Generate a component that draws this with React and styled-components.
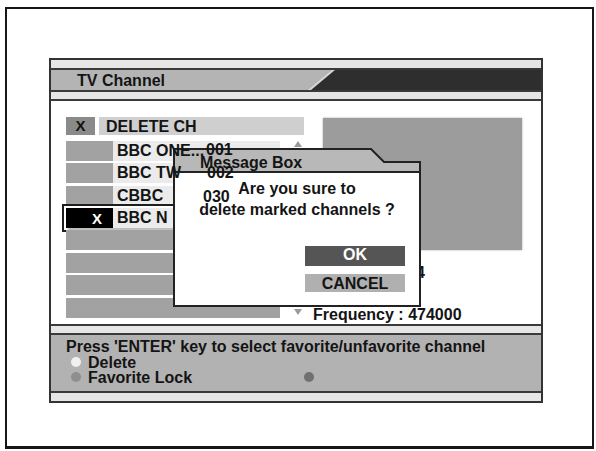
import React from 'react';
import styled, { createGlobalStyle } from 'styled-components';

const GlobalStyle = createGlobalStyle`
  html, body {
    margin: 0;
    padding: 0;
    background: #fff;
  }
  body {
    font-family: "Liberation Sans", Arial, sans-serif;
    font-weight: bold;
    color: #141414;
  }
`;

const Page = styled.div`
  width: 596px;
  height: 451px;
  padding: 7px 0 0 5px;
  box-sizing: border-box;
`;

const Frame = styled.div`
  width: 589px;
  height: 442px;
  box-sizing: border-box;
  border: 2px solid #161616;
  border-bottom-width: 3px;
  padding: 49px 0 0 42px;
`;

const Panel = styled.div`
  width: 494px;
  height: 345px;
  box-sizing: border-box;
  border: 2px solid #333;
  display: flex;
  flex-direction: column;
`;

const Strip = styled.div`
  height: ${({ $h }) => $h}px;
  background: #e6e6e6;
  border-bottom: ${({ $noLine }) => ($noLine ? '0' : '2px solid #3a3a3a')};
  border-top: ${({ $lineTop }) => ($lineTop ? '2px solid #3a3a3a' : '0')};
`;

const TitleBar = styled.div`
  height: 20px;
  display: flex;
  background: #b4b4b4;
  border-bottom: 2px solid #3a3a3a;
`;

const TitleText = styled.div`
  flex: 1;
  padding-left: 26px;
  font-size: 16px;
  line-height: 21px;
`;

const DarkTab = styled.div`
  position: relative;
  width: 233px;
  background: #d8d8d8;
  clip-path: polygon(24px 0, 100% 0, 100% 100%, 0 100%);

  &::after {
    content: '';
    position: absolute;
    inset: 0;
    background: #2e2e2e;
    clip-path: polygon(27px 0, 100% 0, 100% 100%, 3px 100%);
  }
`;

const Content = styled.div`
  position: relative;
  height: 225px;
  background: #fff;
  display: flex;
  gap: 9px;
  padding: 16px 0 0 15px;
  box-sizing: border-box;
`;

const ListCol = styled.div`
  width: 238px;
  display: flex;
  flex-direction: column;
`;

const ListHeader = styled.div`
  height: 18px;
  display: flex;
  gap: 4px;
`;

const XBox = styled.div`
  width: 29px;
  background: #8a8a8a;
  display: flex;
  align-items: center;
  justify-content: center;
  font-size: 15px;
  color: #111;
`;

const DeleteBar = styled.div`
  flex: 1;
  background: #cfcfcf;
  padding-left: 7px;
  font-size: 16px;
  line-height: 19px;
`;

const ListBody = styled.div`
  display: flex;
  margin-top: 6px;
`;

const Rows = styled.div`
  width: 214px;
  display: grid;
  grid-auto-rows: 20px;
  row-gap: 2.4px;
`;

const Row = styled.div`
  position: relative;
  display: flex;
  background: ${({ $empty }) => ($empty ? '#a2a2a2' : '#ebebeb')};
  outline: ${({ $selected }) => ($selected ? '2px solid #1e1e1e' : 'none')};
  outline-offset: 2px;
  box-shadow: ${({ $selected }) => ($selected ? '2px 3px 2px #bdbdbd' : 'none')};
`;

const Block = styled.div`
  width: 47px;
  background: ${({ $selected }) => ($selected ? '#000' : '#a2a2a2')};
  color: #fff;
  font-size: 15px;
  display: flex;
  align-items: center;
  justify-content: flex-end;
  padding-right: 11px;
  box-sizing: border-box;
`;

const Name = styled.span`
  position: relative;
  z-index: 3;
  padding-left: 4px;
  font-size: 16px;
  line-height: 20px;
`;

const Num = styled.span`
  position: absolute;
  z-index: 3;
  left: ${({ $x }) => $x}px;
  top: ${({ $y }) => $y}px;
  font-size: 16px;
  line-height: 16px;
`;

const Scroll = styled.div`
  flex: 1;
  display: flex;
  flex-direction: column;
  justify-content: space-between;
  padding: 0 0 3px 14px;
`;

const Arrow = styled.div`
  width: 0;
  height: 0;
  border-left: 4px solid transparent;
  border-right: 4px solid transparent;
  ${({ $down }) =>
    $down ? 'border-top: 6px solid #9a9a9a;' : 'border-bottom: 6px solid #9a9a9a;'}
`;

const RightCol = styled.div`
  flex: 1;
  display: flex;
  flex-direction: column;
`;

const Preview = styled.div`
  margin: 1px 0 0 10px;
  width: 199px;
  height: 132px;
  background: #9c9c9c;
  box-shadow: 0 0 2px #a8a8a8;
`;

const Info = styled.div`
  font-size: 16px;
  line-height: 16px;
  margin-top: ${({ $mt }) => $mt}px;
  padding-left: ${({ $pl }) => $pl || 0}px;
`;

const Dialog = styled.div`
  position: absolute;
  z-index: 2;
  left: 122px;
  top: 47px;
  width: 248px;
  height: 159px;
  display: flex;
  flex-direction: column;
`;

const DialogHead = styled.div`
  position: relative;
  height: 24px;
  flex: none;

  svg {
    position: absolute;
    left: 0;
    top: 0;
  }
`;

const HeadText = styled.div`
  position: relative;
  padding: 7px 0 0 27px;
  font-size: 16px;
  line-height: 16px;
`;

const DialogBody = styled.div`
  flex: 1;
  background: #fff;
  border: 2px solid #222;
  border-top: 0;
  display: flex;
  flex-direction: column;
  padding-top: 6px;
`;

const Message = styled.div`
  text-align: center;
  font-size: 16px;
  line-height: 21px;
`;

const Buttons = styled.div`
  display: flex;
  flex-direction: column;
  align-items: flex-end;
  gap: 8px;
  margin-top: 26px;
  padding-right: 14px;
`;

const Button = styled.div`
  width: 100px;
  height: ${({ $primary }) => ($primary ? 20 : 18)}px;
  background: ${({ $primary }) => ($primary ? '#555' : '#b0b0b0')};
  color: ${({ $primary }) => ($primary ? '#fff' : '#141414')};
  font-size: 16px;
  line-height: ${({ $primary }) => ($primary ? 18 : 19)}px;
  text-align: center;
`;

const Help = styled.div`
  height: 54px;
  background: #b2b2b2;
  border-bottom: 2px solid #3a3a3a;
  padding: 3px 0 0 15px;
  box-sizing: content-box;
  font-size: 16px;
`;

const HelpLine = styled.div`
  line-height: 17px;
`;

const LegendRow = styled.div`
  display: flex;
  align-items: center;
  height: 15px;
`;

const LegendItem = styled.div`
  width: 238px;
  display: flex;
  align-items: center;
  gap: 7px;
  padding-left: 5px;
  box-sizing: border-box;
  line-height: 15px;
`;

const Dot = styled.span`
  width: 10px;
  height: 10px;
  border-radius: 50%;
  background: ${({ $c }) => $c};
  flex: none;
`;

const channels = [
  { name: 'BBC ONE...', num: '001', x: 140, y: 1 },
  { name: 'BBC TW', num: '002', x: 141, y: 2 },
  { name: 'CBBC', num: '030', x: 137, y: 3 },
  { name: 'BBC N', selected: true },
  { empty: true },
  { empty: true },
  { empty: true },
  { empty: true },
];

export default function App() {
  return (
    <Page>
      <GlobalStyle />
      <Frame>
        <Panel>
          <Strip $h={8} />
          <TitleBar>
            <TitleText>TV Channel</TitleText>
            <DarkTab />
          </TitleBar>
          <Strip $h={7} />
          <Content>
            <ListCol>
              <ListHeader>
                <XBox>X</XBox>
                <DeleteBar>DELETE CH</DeleteBar>
              </ListHeader>
              <ListBody>
                <Rows>
                  {channels.map((c, i) =>
                    c.empty ? (
                      <Row key={i} $empty />
                    ) : (
                      <Row key={i} $selected={c.selected}>
                        <Block $selected={c.selected}>{c.selected ? 'X' : ''}</Block>
                        <Name>{c.name}</Name>
                        {c.num && (
                          <Num $x={c.x} $y={c.y}>
                            {c.num}
                          </Num>
                        )}
                      </Row>
                    )
                  )}
                </Rows>
                <Scroll>
                  <Arrow />
                  <Arrow $down />
                </Scroll>
              </ListBody>
            </ListCol>
            <RightCol>
              <Preview />
              <Info $mt={15} $pl={103}>4</Info>
              <Info $mt={26}>Frequency : 474000</Info>
            </RightCol>
            <Dialog>
              <DialogHead>
                <svg width="248" height="25" viewBox="0 0 248 25">
                  <polygon
                    points="1,1 198,1 211,14 247,14 247,24 1,24"
                    fill="#b8b8b8"
                    stroke="#222"
                    strokeWidth="2"
                  />
                </svg>
                <HeadText>Message Box</HeadText>
              </DialogHead>
              <DialogBody>
                <Message>
                  Are you sure to
                  <br />
                  delete marked channels ?
                </Message>
                <Buttons>
                  <Button $primary>OK</Button>
                  <Button>CANCEL</Button>
                </Buttons>
              </DialogBody>
            </Dialog>
          </Content>
          <Strip $h={7} $lineTop />
          <Help>
            <HelpLine>Press 'ENTER' key to select favorite/unfavorite channel</HelpLine>
            <LegendRow>
              <LegendItem>
                <Dot $c="#f0f0f0" />
                Delete
              </LegendItem>
            </LegendRow>
            <LegendRow>
              <LegendItem>
                <Dot $c="#8e8e8e" />
                Favorite Lock
              </LegendItem>
              <Dot $c="#707070" />
            </LegendRow>
          </Help>
          <Strip $h={8} $noLine />
        </Panel>
      </Frame>
    </Page>
  );
}
